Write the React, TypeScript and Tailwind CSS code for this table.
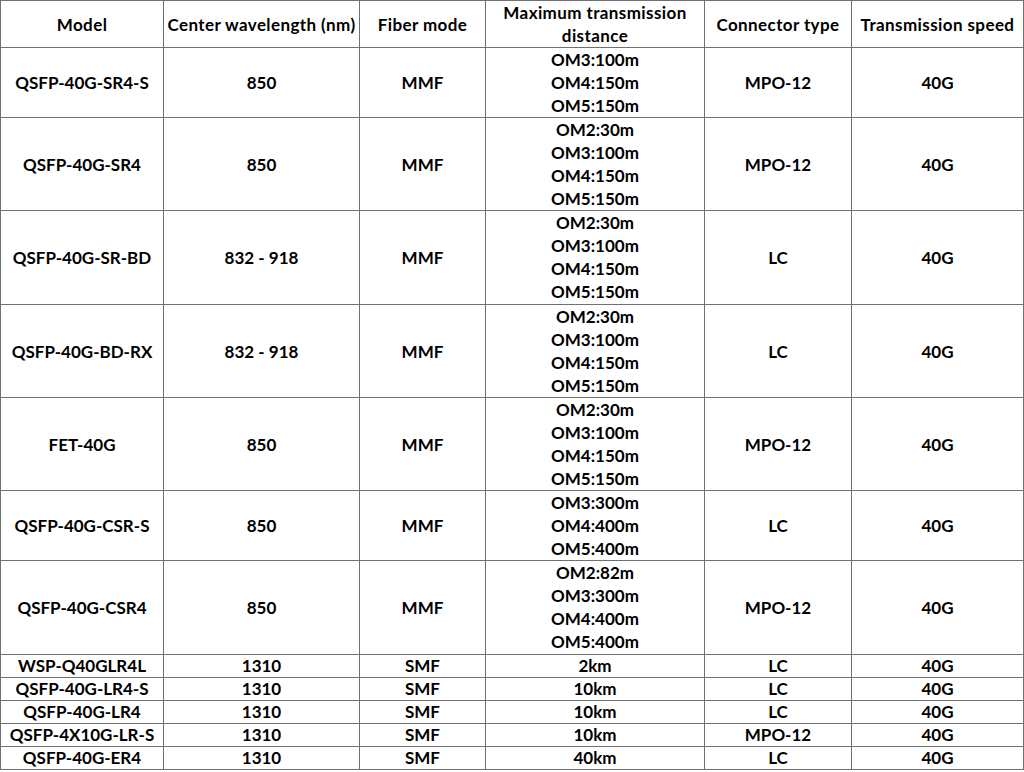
type Row = {
  model: string
  wavelength: string
  mode: string
  distance: string[]
  connector: string
  speed: string
  tall?: boolean
}

const ROWS: Row[] = [
  { model: 'QSFP-40G-SR4-S', wavelength: '850', mode: 'MMF', distance: ['OM3:100m', 'OM4:150m', 'OM5:150m'], connector: 'MPO-12', speed: '40G' },
  { model: 'QSFP-40G-SR4', wavelength: '850', mode: 'MMF', distance: ['OM2:30m', 'OM3:100m', 'OM4:150m', 'OM5:150m'], connector: 'MPO-12', speed: '40G' },
  { model: 'QSFP-40G-SR-BD', wavelength: '832 - 918', mode: 'MMF', distance: ['OM2:30m', 'OM3:100m', 'OM4:150m', 'OM5:150m'], connector: 'LC', speed: '40G', tall: true },
  { model: 'QSFP-40G-BD-RX', wavelength: '832 - 918', mode: 'MMF', distance: ['OM2:30m', 'OM3:100m', 'OM4:150m', 'OM5:150m'], connector: 'LC', speed: '40G' },
  { model: 'FET-40G', wavelength: '850', mode: 'MMF', distance: ['OM2:30m', 'OM3:100m', 'OM4:150m', 'OM5:150m'], connector: 'MPO-12', speed: '40G' },
  { model: 'QSFP-40G-CSR-S', wavelength: '850', mode: 'MMF', distance: ['OM3:300m', 'OM4:400m', 'OM5:400m'], connector: 'LC', speed: '40G' },
  { model: 'QSFP-40G-CSR4', wavelength: '850', mode: 'MMF', distance: ['OM2:82m', 'OM3:300m', 'OM4:400m', 'OM5:400m'], connector: 'MPO-12', speed: '40G', tall: true },
  { model: 'WSP-Q40GLR4L', wavelength: '1310', mode: 'SMF', distance: ['2km'], connector: 'LC', speed: '40G' },
  { model: 'QSFP-40G-LR4-S', wavelength: '1310', mode: 'SMF', distance: ['10km'], connector: 'LC', speed: '40G' },
  { model: 'QSFP-40G-LR4', wavelength: '1310', mode: 'SMF', distance: ['10km'], connector: 'LC', speed: '40G' },
  { model: 'QSFP-4X10G-LR-S', wavelength: '1310', mode: 'SMF', distance: ['10km'], connector: 'MPO-12', speed: '40G' },
  { model: 'QSFP-40G-ER4', wavelength: '1310', mode: 'SMF', distance: ['40km'], connector: 'LC', speed: '40G' },
]

const cell = 'border border-[#707070] p-0 text-center align-middle'

export default function App() {
  return (
    <div className="min-h-[772px] bg-white font-['Lato',sans-serif] text-[17px] font-bold text-black">
      <table className="w-[1023px] table-fixed border-collapse">
        <colgroup>
          <col className="w-[163px]" />
          <col className="w-[196px]" />
          <col className="w-[126px]" />
          <col className="w-[219px]" />
          <col className="w-[147px]" />
          <col className="w-[172px]" />
        </colgroup>
        <thead>
          <tr className="leading-[23px] tracking-[0.4px]">
            <th className={cell}>Model</th>
            <th className={cell}>Center wavelength (nm)</th>
            <th className={cell}>Fiber mode</th>
            <th className={cell}>
              Maximum transmission
              <br />
              distance
            </th>
            <th className={cell}>Connector type</th>
            <th className={cell}>Transmission speed</th>
          </tr>
        </thead>
        <tbody>
          {ROWS.map((r) => (
            <tr key={r.model} className={r.distance.length > 1 ? 'leading-[23px]' : 'leading-[22px]'}>
              <td className={cell}>{r.model}</td>
              <td className={cell}>{r.wavelength}</td>
              <td className={cell}>{r.mode}</td>
              <td className={r.tall ? `${cell} pb-px` : cell}>
                {r.distance.map((d) => (
                  <div key={d}>{d}</div>
                ))}
              </td>
              <td className={cell}>{r.connector}</td>
              <td className={cell}>{r.speed}</td>
            </tr>
          ))}
        </tbody>
      </table>
    </div>
  )
}
